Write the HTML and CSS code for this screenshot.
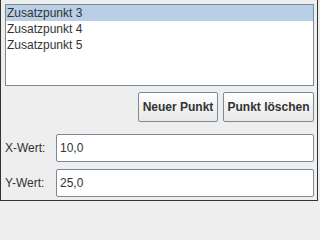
FILE: index.html
```html
<!DOCTYPE html>
<html>
<head>
<meta charset="utf-8">
<link rel="stylesheet" href="styles.css">
</head>
<body>
<div class="frame">
  <ul class="list">
    <li class="item selected">Zusatzpunkt 3</li>
    <li class="item">Zusatzpunkt 4</li>
    <li class="item">Zusatzpunkt 5</li>
  </ul>
  <div class="buttons">
    <button class="btn btn-new">Neuer Punkt</button>
    <button class="btn btn-del">Punkt löschen</button>
  </div>
  <div class="field-row row-x">
    <label class="label">X-Wert:</label>
    <div class="field">10,0</div>
  </div>
  <div class="field-row row-y">
    <label class="label">Y-Wert:</label>
    <div class="field">25,0</div>
  </div>
</div>
</body>
</html>
```
FILE: styles.css
```css
html, body {
  margin: 0;
  padding: 0;
  background: #eeeeee;
}
.frame {
  box-sizing: border-box;
  width: 318px;
  height: 201px;
  border: 1px solid #333333;
  border-top: none;
  padding: 4px 3px 0 4px;
  display: flex;
  flex-direction: column;
  font-family: "Liberation Sans", Arial, sans-serif;
  font-size: 12px;
  color: #333333;
}
.list {
  box-sizing: border-box;
  height: 82px;
  margin: 0;
  padding: 0;
  list-style: none;
  background: #ffffff;
  border: 1px solid #7a8a99;
}
.item {
  height: 16px;
  line-height: 16px;
  padding-left: 1px;
}
.selected {
  background: #b8cfe5;
}
.buttons {
  display: flex;
  justify-content: flex-end;
  gap: 5px;
  margin-top: 6px;
}
.btn {
  box-sizing: border-box;
  height: 30px;
  padding: 0;
  border: 1px solid #7a8a99;
  border-radius: 2px;
  background: linear-gradient(to bottom, #ffffff 0%, #f4f4f4 40%, #e8e8e8 100%);
  font-family: "Liberation Sans", Arial, sans-serif;
  font-size: 12px;
  font-weight: bold;
  color: #333333;
}
.btn-new {
  width: 80px;
}
.btn-del {
  width: 91px;
}
.field-row {
  display: flex;
  align-items: center;
  height: 28px;
}
.row-x {
  margin-top: 12px;
}
.row-y {
  margin-top: 7px;
}
.label {
  width: 51px;
  padding-left: 0;
}
.field {
  box-sizing: border-box;
  flex: 1;
  height: 28px;
  line-height: 26px;
  padding-left: 3px;
  background: #ffffff;
  border: 1px solid #7a8a99;
  border-radius: 2px;
}
```
